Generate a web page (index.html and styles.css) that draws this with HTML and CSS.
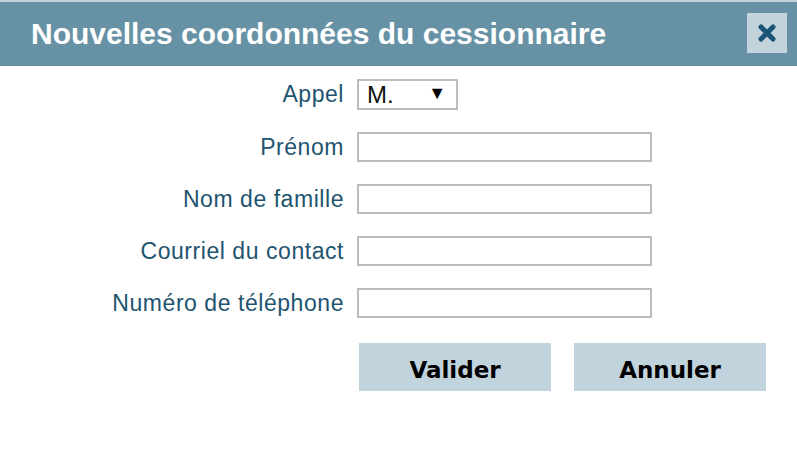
FILE: index.html
```html
<!DOCTYPE html>
<html>
<head>
  <title>Nouvelles coordonnées du cessionnaire</title>
  <link rel="stylesheet" href="styles.css">
</head>
<body>
  <div class="dialog">
    <div class="dialog-header">
      <h1>Nouvelles coordonnées du cessionnaire</h1>
      <button type="button" class="closebtn" title="Fermer">
        <svg width="20" height="20" viewBox="0 0 20 20">
          <path d="M4 4 L16 16 M16 4 L4 16" stroke="#1b5474" stroke-width="5" stroke-linecap="round"/>
        </svg>
      </button>
    </div>
    <form class="form-container">
      <label for="appel">Appel</label>
      <div class="select-wrap">
        <select id="appel" name="appel">
          <option>M.</option>
          <option>Mme</option>
        </select>
        <span class="arrow">&#9660;</span>
      </div>

      <label for="prenom">Prénom</label>
      <input type="text" id="prenom" name="prenom">

      <label for="nom">Nom de famille</label>
      <input type="text" id="nom" name="nom">

      <label for="courriel">Courriel du contact</label>
      <input type="text" id="courriel" name="courriel">

      <label for="tel">Numéro de téléphone</label>
      <input type="text" id="tel" name="tel">

      <div class="buttons">
        <button type="submit" class="btn">Valider</button>
        <button type="button" class="btn">Annuler</button>
      </div>
    </form>
  </div>
</body>
</html>
```

FILE: styles.css
```css
* {box-sizing: border-box}
body {
  margin: 0;
  background: #fff;
  font-family: "Liberation Sans", Arial, sans-serif;
}
.dialog-header {
  border-top: 2px solid #c3d4dc;
  height: 66px;
  background: #6792a6;
  display: flex;
  align-items: center;
  justify-content: space-between;
  padding: 0 10px 0 31px;
}
.dialog-header h1 {
  margin: 0 0 1px 0;
  color: #fff;
  font-size: 30px;
  font-weight: bold;
}
.closebtn {
  width: 40px;
  height: 40px;
  margin-top: -2px;
  border: none;
  padding: 0;
  background: #c2d3db;
  display: flex;
  align-items: center;
  justify-content: center;
  cursor: pointer;
}
.form-container {
  display: grid;
  grid-template-columns: 343px 295px;
  column-gap: 14px;
  row-gap: 22px;
  align-items: center;
  padding-top: 13px;
}
.form-container label {
  text-align: right;
  font-size: 23px;
  letter-spacing: 0.55px;
  color: #1e5470;
  margin-right: -1px;
}
.form-container input[type=text] {
  width: 295px;
  height: 30px;
  border: 2px solid #bcbcbc;
  background: #fff;
  font-size: 18px;
  padding: 0 6px;
  outline: none;
}
.select-wrap {
  position: relative;
  width: 101px;
  height: 31px;
}
.select-wrap select {
  width: 100%;
  height: 100%;
  appearance: none;
  -webkit-appearance: none;
  border: 2px solid #bcbcbc;
  background: #fff;
  font-family: "Liberation Sans", Arial, sans-serif;
  font-size: 24px;
  color: #111;
  padding: 0 0 0 8px;
  border-radius: 0;
  outline: none;
}
.select-wrap .arrow {
  position: absolute;
  right: 12px;
  top: 4px;
  font-size: 18px;
  color: #000;
  pointer-events: none;
}
.buttons {
  grid-column: 2;
  display: flex;
  gap: 23px;
  margin: 3px 0 0 2px;
}
.btn {
  width: 192px;
  height: 48px;
  flex: none;
  border: none;
  background: #c1d3dc;
  font-family: "DejaVu Sans", "Liberation Sans", sans-serif;
  font-size: 23px;
  font-weight: bold;
  color: #000;
  padding-top: 6px;
  cursor: pointer;
}
```
